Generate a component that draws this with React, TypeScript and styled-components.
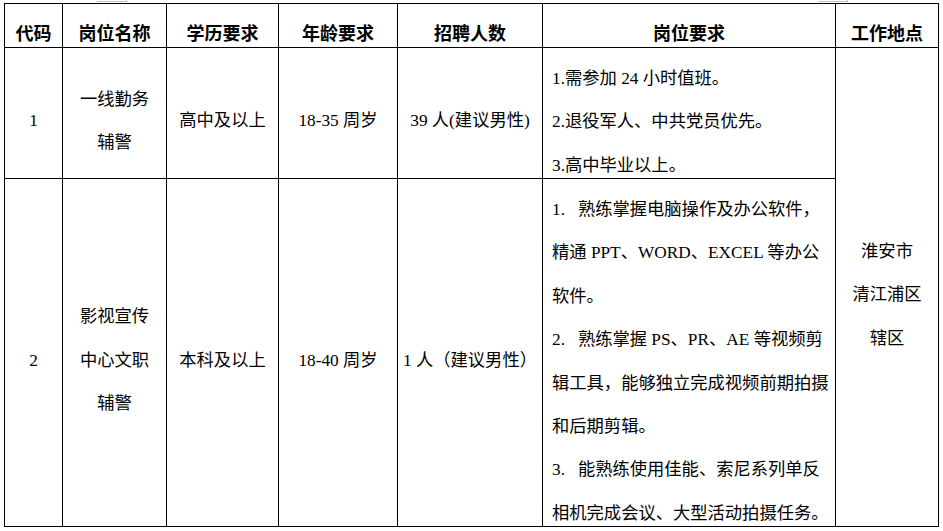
import React from "react";
import styled, { createGlobalStyle } from "styled-components";

const GlobalStyle = createGlobalStyle`
body {
  margin: 0;
  background-color: #ffffff;
  color: #000000;
  font-family: "Liberation Serif", "Noto Sans CJK SC", serif;
}
`;

const Page = styled.div`
  position: relative;
  padding: 3px 0 0 4px;
  width: 943px;
  height: 531px;
  box-sizing: border-box;
`;

const Handle = styled.div<{ left: number }>`
  position: absolute;
  top: 0;
  left: ${(p) => p.left}px;
  width: 29px;
  height: 1px;
  border-bottom: 1px solid #c4c4c4;
  border-right: 1px solid #c4c4c4;
`;

const Table = styled.table`
  border-collapse: collapse;
  table-layout: fixed;
  width: 935px;
`;

const HeadCell = styled.th`
  padding: 12px 0 0;
  border: 1px solid #000;
  font-family: "Noto Sans CJK SC", sans-serif;
  font-weight: 700;
  font-size: 18px;
  line-height: 28px;
  text-align: center;
  vertical-align: middle;
`;

const Cell = styled.td<{ top?: boolean }>`
  padding: ${(p) => (p.top ? "9px 0 0 9px" : "16px 0 0")};
  border: 1px solid #000;
  font-size: 17.3px;
  line-height: 43.4px;
  text-align: ${(p) => (p.top ? "left" : "center")};
  vertical-align: ${(p) => (p.top ? "top" : "middle")};
  white-space: nowrap;
`;

const Lines = styled.div`
  margin-bottom: -12px;
`;

const Line = styled.div``;

const Row = styled.tr<{ h: number }>`
  height: ${(p) => p.h}px;
`;

const widths = [58, 104, 112, 119, 145, 293, 103];
const headers = ["代码", "岗位名称", "学历要求", "年龄要求", "招聘人数", "岗位要求", "工作地点"];

const sp = "\u00a0\u00a0\u00a0";

const rows = [
  {
    code: "1",
    name: ["一线勤务", "辅警"],
    edu: "高中及以上",
    age: "18-35 周岁",
    count: "39 人(建议男性)",
    req: ["1.需参加 24 小时值班。", "2.退役军人、中共党员优先。", "3.高中毕业以上。"],
    h: 131,
  },
  {
    code: "2",
    name: ["影视宣传", "中心文职", "辅警"],
    edu: "本科及以上",
    age: "18-40 周岁",
    count: "1 人（建议男性）",
    req: [
      `1.${sp}熟练掌握电脑操作及办公软件，`,
      "精通 PPT、WORD、EXCEL 等办公",
      "软件。",
      `2.${sp}熟练掌握 PS、PR、AE 等视频剪`,
      "辑工具，能够独立完成视频前期拍摄",
      "和后期剪辑。",
      `3.${sp}能熟练使用佳能、索尼系列单反`,
      "相机完成会议、大型活动拍摄任务。",
    ],
    h: 348,
  },
];

export default function App() {
  return (
    <Page>
      <GlobalStyle />
      <Handle left={97} />
      <Handle left={818} />
      <Table>
        <colgroup>
          {widths.map((w, i) => (
            <col key={i} style={{ width: w }} />
          ))}
        </colgroup>
        <thead>
          <Row h={44}>
            {headers.map((t) => (
              <HeadCell key={t}>{t}</HeadCell>
            ))}
          </Row>
        </thead>
        <tbody>
          {rows.map((r, i) => (
            <Row key={r.code} h={r.h}>
              <Cell>{r.code}</Cell>
              <Cell>
                {r.name.map((n) => (
                  <Line key={n}>{n}</Line>
                ))}
              </Cell>
              <Cell>{r.edu}</Cell>
              <Cell>{r.age}</Cell>
              <Cell>{r.count}</Cell>
              <Cell top>
                <Lines>
                  {r.req.map((l) => (
                    <Line key={l}>{l}</Line>
                  ))}
                </Lines>
              </Cell>
              {i === 0 && (
                <Cell rowSpan={2}>
                  <Line>淮安市</Line>
                  <Line>清江浦区</Line>
                  <Line>辖区</Line>
                </Cell>
              )}
            </Row>
          ))}
        </tbody>
      </Table>
    </Page>
  );
}
